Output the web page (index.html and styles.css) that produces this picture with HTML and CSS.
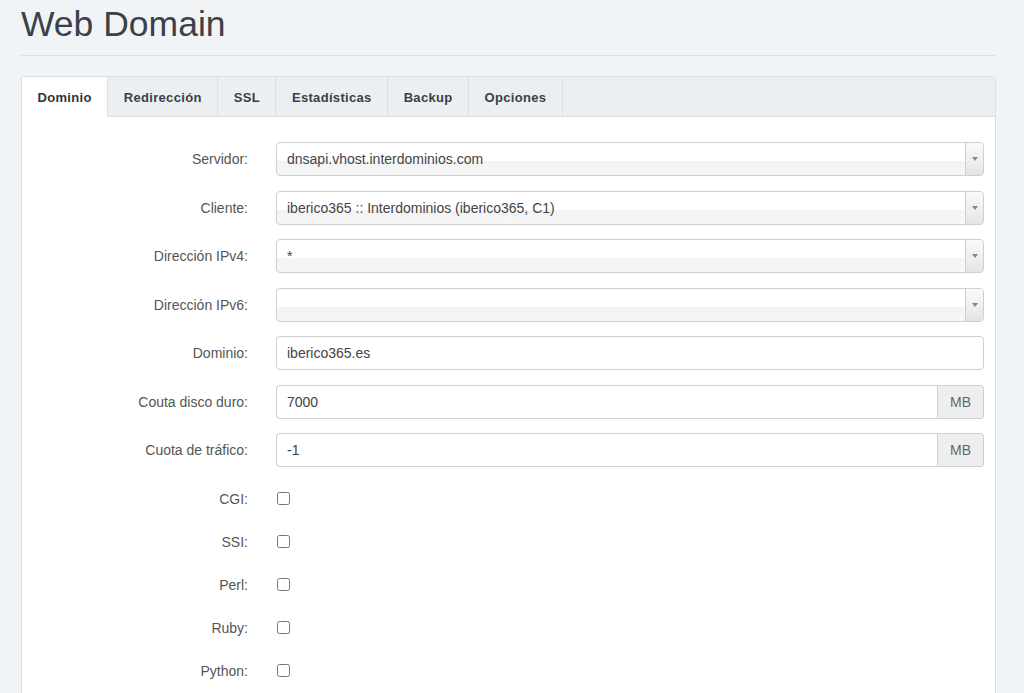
FILE: index.html
```html
<!DOCTYPE html>
<html lang="es">
<head>
<meta charset="utf-8">
<title>Web Domain</title>
<link rel="stylesheet" href="styles.css">
</head>
<body>
<div class="page">
  <h1 class="title">Web Domain</h1>
  <div class="rule"></div>
  <div class="panel">
    <ul class="tabs">
      <li class="tab active">Dominio</li>
      <li class="tab">Redirección</li>
      <li class="tab">SSL</li>
      <li class="tab">Estadísticas</li>
      <li class="tab">Backup</li>
      <li class="tab">Opciones</li>
    </ul>
    <form class="form">
      <div class="row">
        <label class="lbl">Servidor:</label>
        <div class="select"><span class="sel-text">dnsapi.vhost.interdominios.com</span><span class="sel-arrow"><i class="tri"></i></span></div>
      </div>
      <div class="row">
        <label class="lbl">Cliente:</label>
        <div class="select"><span class="sel-text">iberico365 :: Interdominios (iberico365, C1)</span><span class="sel-arrow"><i class="tri"></i></span></div>
      </div>
      <div class="row">
        <label class="lbl">Dirección IPv4:</label>
        <div class="select"><span class="sel-text">*</span><span class="sel-arrow"><i class="tri"></i></span></div>
      </div>
      <div class="row">
        <label class="lbl">Dirección IPv6:</label>
        <div class="select"><span class="sel-text"></span><span class="sel-arrow"><i class="tri"></i></span></div>
      </div>
      <div class="row">
        <label class="lbl">Dominio:</label>
        <div class="input">iberico365.es</div>
      </div>
      <div class="row">
        <label class="lbl">Couta disco duro:</label>
        <div class="group"><div class="input grouped">7000</div><span class="addon">MB</span></div>
      </div>
      <div class="row">
        <label class="lbl">Cuota de tráfico:</label>
        <div class="group"><div class="input grouped">-1</div><span class="addon">MB</span></div>
      </div>
      <div class="checks">
        <div class="crow"><label class="lbl">CGI:</label><span class="cb"></span></div>
        <div class="crow"><label class="lbl">SSI:</label><span class="cb"></span></div>
        <div class="crow"><label class="lbl">Perl:</label><span class="cb"></span></div>
        <div class="crow"><label class="lbl">Ruby:</label><span class="cb"></span></div>
        <div class="crow"><label class="lbl">Python:</label><span class="cb"></span></div>
      </div>
    </form>
  </div>
</div>
</body>
</html>
```

FILE: styles.css
```css
* { box-sizing: border-box; }
html, body { margin: 0; padding: 0; }
body {
  background: #f1f4f7;
  font-family: "Liberation Sans", Arial, sans-serif;
  color: #555;
  height: 693px;
  overflow: hidden;
}
.page { padding: 0 28px 0 21px; }
.title {
  margin: 0;
  padding-top: 4px;
  font-size: 35.5px;
  font-weight: normal;
  line-height: 40px;
  color: #3b4148;
  height: 42px;
}
.rule {
  height: 1px;
  background: #dde1e5;
  margin-top: 13px;
}
.panel {
  margin-top: 20px;
  background: #fff;
  border: 1px solid #dcdfe3;
  border-radius: 3px 3px 0 0;
  height: 700px;
}
.tabs {
  list-style: none;
  margin: 0;
  padding: 0;
  display: flex;
  height: 40px;
  background: #eceff2;
  border-bottom: 1px solid #dcdfe3;
}
.tab {
  font-size: 13px;
  font-weight: bold;
  color: #3a3f45;
  padding: 0 15.5px;
  line-height: 41px;
  border-right: 1px solid #dcdfe3;
  letter-spacing: 0.32px;
}
.tab.active {
  background: #fff;
  height: 40px;
  color: #2f3338;
}
.form {
  padding: 25px 11px 0 0;
}
.row {
  display: grid;
  grid-template-columns: 240px 1fr;
  column-gap: 14px;
  align-items: center;
  height: 34px;
  margin-bottom: 14.5px;
}
.lbl {
  text-align: right;
  padding-right: 14px;
  font-size: 14px;
  color: #555;
}
.select {
  position: relative;
  height: 34px;
  border: 1px solid #cfcfcf;
  border-radius: 4px;
  background: linear-gradient(to bottom, #fff 0%, #fff 55%, #f3f3f3 56%, #f7f7f7 100%);
  display: flex;
  align-items: center;
  font-size: 14px;
  color: #444;
}
.sel-text { flex: 1; padding-left: 10px; }
.sel-arrow {
  width: 18px;
  height: 100%;
  border-left: 1px solid #cfcfcf;
  background: linear-gradient(to bottom, #fafafa 0%, #eeeeee 60%, #e3e3e3 100%);
  border-radius: 0 3px 3px 0;
  display: flex;
  align-items: center;
  justify-content: center;
}
.tri {
  width: 0; height: 0;
  border-left: 3.5px solid transparent;
  border-right: 3.5px solid transparent;
  border-top: 4px solid #888;
}
.input {
  height: 34px;
  border: 1px solid #cfcfcf;
  border-radius: 4px;
  background: #fff;
  display: flex;
  align-items: center;
  padding-left: 10px;
  font-size: 14px;
  color: #444;
}
.group { display: flex; height: 34px; }
.input.grouped { flex: 1; border-radius: 4px 0 0 4px; }
.addon {
  width: 46px;
  border: 1px solid #cfcfcf;
  border-left: 0;
  border-radius: 0 4px 4px 0;
  background: #eeeeee;
  display: flex;
  align-items: center;
  justify-content: center;
  font-size: 14px;
  color: #666;
}
.checks { margin-top: -4.5px; }
.crow {
  display: grid;
  grid-template-columns: 240px 1fr;
  column-gap: 14px;
  align-items: center;
  height: 43px;
}
.cb {
  width: 13px;
  height: 13px;
  border: 1px solid #777;
  border-radius: 2.5px;
  background: #fff;
  margin-left: 1px;
}
```
